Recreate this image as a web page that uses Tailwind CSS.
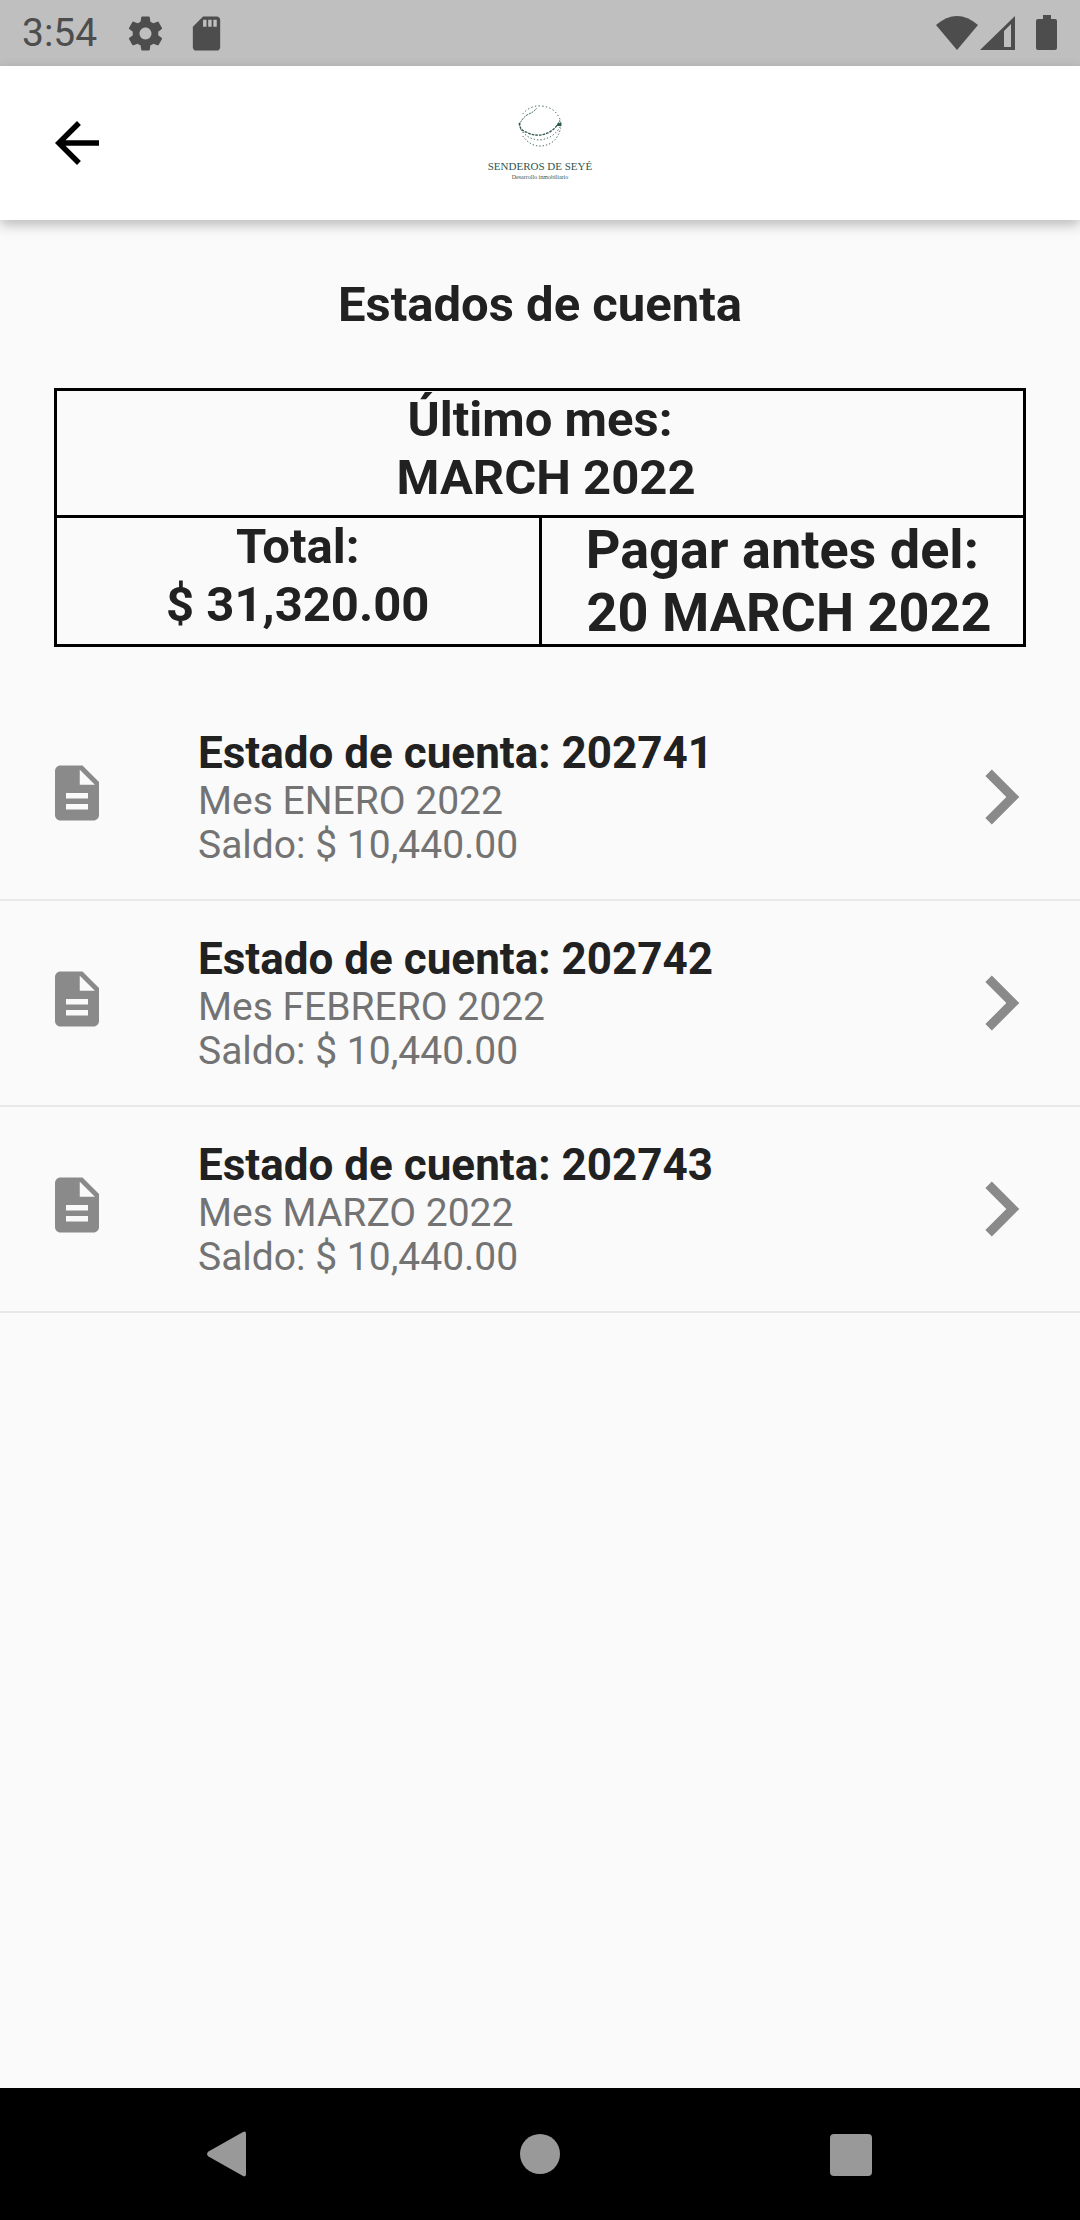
<!DOCTYPE html>
<html lang="es">
<head>
    <meta charset="UTF-8">
    <meta name="viewport" content="width=device-width, initial-scale=1.0">
    <title>Estados de cuenta</title>
    <script src="https://cdn.jsdelivr.net/npm/@tailwindcss/browser@4"></script>
</head>
<body class="flex min-h-screen flex-col bg-[#fafafa] font-['Roboto',sans-serif] text-[#212121]">

    <!-- Barra de estado -->
    <div class="flex h-[66px] items-center bg-[#bfbfbf] px-[22px] text-[#4d4d4d]">
        <span class="text-[39px] leading-none">3:54</span>
        <svg class="ml-7 size-[41px]" viewBox="0 0 24 24" fill="currentColor"><path d="M19.43 12.98c.04-.32.07-.64.07-.98s-.03-.66-.07-.98l2.11-1.65c.19-.15.24-.42.12-.64l-2-3.46c-.12-.22-.39-.3-.61-.22l-2.49 1c-.52-.4-1.08-.73-1.69-.98l-.38-2.65C14.46 2.18 14.25 2 14 2h-4c-.25 0-.46.18-.49.42l-.38 2.65c-.61.25-1.17.59-1.69.98l-2.49-1c-.23-.09-.49 0-.61.22l-2 3.46c-.13.22-.07.49.12.64l2.11 1.65c-.04.32-.07.65-.07.98s.03.66.07.98l-2.11 1.65c-.19.15-.24.42-.12.64l2 3.46c.12.22.39.3.61.22l2.49-1c.52.4 1.08.73 1.69.98l.38 2.65c.03.24.24.42.49.42h4c.25 0 .46-.18.49-.42l.38-2.65c.61-.25 1.17-.59 1.69-.98l2.49 1c.23.09.49 0 .61-.22l2-3.46c.12-.22.07-.49-.12-.64l-2.11-1.65zM12 15.5c-1.93 0-3.5-1.57-3.5-3.5s1.57-3.5 3.5-3.5 3.5 1.57 3.5 3.5-1.57 3.5-3.5 3.5z"/></svg>
        <svg class="ml-5 size-[41px]" viewBox="0 0 24 24" fill="currentColor"><path d="M18 2h-8L4 8v12c0 1.1.9 2 2 2h12c1.1 0 2-.9 2-2V4c0-1.100-.9-2-2-2zm-6 6h-2V4h2v4zm3 0h-2V4h2v4zm3 0h-2V4h2v4z"/></svg>
        <svg class="ml-auto h-9 w-[42px]" viewBox="0 0 42 36" fill="currentColor"><path d="M0 10Q21-8 42 10L21 35z"/></svg>
        <svg class="ml-0.5 size-9" viewBox="0 0 36 36" fill="currentColor"><path fill-rule="evenodd" d="M35 1v34H0zM24 16v16h7V9z"/></svg>
        <svg class="ml-5 h-9 w-[22px]" viewBox="0 0 22 36" fill="currentColor"><path d="M7 0h8v4h4q2 0 2 2v27q0 2-2 2H2q-2 0-2-2V6q0-2 2-2h5z"/></svg>
    </div>

    <!-- Encabezado -->
    <header class="z-10 grid h-[154px] grid-cols-3 items-center bg-white px-11 shadow-[0_5px_12px_rgba(0,0,0,0.25)]">
        <button type="button" aria-label="Regresar" class="size-[66px] text-black">
            <svg class="size-full" viewBox="0 0 24 24" fill="currentColor"><path d="M20 11H7.83l5.59-5.59L12 4l-8 8 8 8 1.41-1.41L7.83 13H20z"/></svg>
        </button>
        <div class="flex flex-col items-center text-[#2f5750]">
            <svg class="size-11" viewBox="24 16 132 132" fill="none" stroke="currentColor" stroke-width="3">
                <path d="M38 46Q60 20 92 22Q134 24 150 62" stroke-dasharray="4 7"/>
                <path d="M29 80Q34 58 56 46Q72 40 80 28" stroke-dasharray="6 3"/>
                <path d="M28 72Q28 94 48 100Q86 120 122 98Q140 86 150 66" stroke-width="4" stroke-dasharray="8 3"/>
                <path d="M32 92Q52 122 88 124Q130 120 151 84" stroke-dasharray="4 6"/>
                <path d="M38 112Q62 144 94 142Q140 138 152 88" stroke-dasharray="4 6"/>
                <path d="M140 80l13-8v9z" fill="currentColor"/>
            </svg>
            <p class="mt-3 font-['Liberation_Serif',serif] text-[11px] leading-3">SENDEROS DE SEYÉ</p>
            <p class="font-['Liberation_Serif',serif] text-[6px] leading-[10px]">Desarrollo inmobiliario</p>
        </div>
    </header>

    <main class="flex-1">
        <h1 class="mt-14 text-center text-[49px] font-bold leading-[58px]">Estados de cuenta</h1>

        <!-- Resumen del último mes -->
        <div class="mt-[54px] px-[54px]">
            <table class="w-full table-fixed border-collapse text-center font-bold">
                <tr class="h-[127px] align-top">
                    <td colspan="2" class="border-3 border-black text-[49px] leading-[58px]">Último mes:<br>&nbsp;MARCH 2022</td>
                </tr>
                <tr class="h-[129px] align-top">
                    <td class="border-3 border-black text-[49px] leading-[58px]">Total:<br>$ 31,320.00</td>
                    <td class="border-3 border-black text-[54px] leading-[63px]">Pagar antes del:<br>&nbsp;20 MARCH 2022</td>
                </tr>
            </table>
        </div>

        <!-- Lista de estados de cuenta -->
        <ul class="mt-12">
            <li class="border-b-2 border-[#e8e8e8]">
                <a href="#" class="flex items-center py-8 pl-11 pr-6">
                    <svg class="mb-2 size-[66px] text-[#8a8a8a]" viewBox="0 0 24 24" fill="currentColor"><path d="M14 2H6c-1.1 0-1.99.9-1.99 2L4 20c0 1.1.89 2 1.99 2H18c1.1 0 2-.9 2-2V8l-6-6zm2 16H8v-2h8v2zm0-4H8v-2h8v2zm-3-5V3.5L18.5 9H13z"/></svg>
                    <div class="ml-[88px] flex-1">
                        <p class="text-[44px] font-bold leading-[52px]">Estado de cuenta: 202741</p>
                        <p class="text-[39px] leading-[44px] text-[#737373]">Mes ENERO 2022<br>Saldo: $ 10,440.00</p>
                    </div>
                    <svg class="size-[110px] text-[#8a8a8a]" viewBox="0 0 24 24" fill="currentColor"><path d="M10 6L8.59 7.41 13.17 12l-4.58 4.59L10 18l6-6z"/></svg>
                </a>
            </li>
            <li class="border-b-2 border-[#e8e8e8]">
                <a href="#" class="flex items-center py-8 pl-11 pr-6">
                    <svg class="mb-2 size-[66px] text-[#8a8a8a]" viewBox="0 0 24 24" fill="currentColor"><path d="M14 2H6c-1.1 0-1.99.9-1.99 2L4 20c0 1.1.89 2 1.99 2H18c1.1 0 2-.9 2-2V8l-6-6zm2 16H8v-2h8v2zm0-4H8v-2h8v2zm-3-5V3.5L18.5 9H13z"/></svg>
                    <div class="ml-[88px] flex-1">
                        <p class="text-[44px] font-bold leading-[52px]">Estado de cuenta: 202742</p>
                        <p class="text-[39px] leading-[44px] text-[#737373]">Mes FEBRERO 2022<br>Saldo: $ 10,440.00</p>
                    </div>
                    <svg class="size-[110px] text-[#8a8a8a]" viewBox="0 0 24 24" fill="currentColor"><path d="M10 6L8.59 7.41 13.17 12l-4.58 4.59L10 18l6-6z"/></svg>
                </a>
            </li>
            <li class="border-b-2 border-[#e8e8e8]">
                <a href="#" class="flex items-center py-8 pl-11 pr-6">
                    <svg class="mb-2 size-[66px] text-[#8a8a8a]" viewBox="0 0 24 24" fill="currentColor"><path d="M14 2H6c-1.1 0-1.99.9-1.99 2L4 20c0 1.1.89 2 1.99 2H18c1.1 0 2-.9 2-2V8l-6-6zm2 16H8v-2h8v2zm0-4H8v-2h8v2zm-3-5V3.5L18.5 9H13z"/></svg>
                    <div class="ml-[88px] flex-1">
                        <p class="text-[44px] font-bold leading-[52px]">Estado de cuenta: 202743</p>
                        <p class="text-[39px] leading-[44px] text-[#737373]">Mes MARZO 2022<br>Saldo: $ 10,440.00</p>
                    </div>
                    <svg class="size-[110px] text-[#8a8a8a]" viewBox="0 0 24 24" fill="currentColor"><path d="M10 6L8.59 7.41 13.17 12l-4.58 4.59L10 18l6-6z"/></svg>
                </a>
            </li>
        </ul>
    </main>

    <!-- Barra de navegación -->
    <nav class="flex h-[132px] items-center justify-center gap-[263px] bg-black text-[#999999]">
        <button type="button" aria-label="Atrás"><svg class="size-12" viewBox="0 0 48 48" fill="currentColor"><path d="M3.500 21.500 38 2q3-1.500 3 2v40q0 3.500-3 2L3.500 26.500q-3-2.500 0-5z"/></svg></button>
        <button type="button" aria-label="Inicio"><svg class="size-12" viewBox="0 0 48 48" fill="currentColor"><circle cx="24" cy="24" r="20"/></svg></button>
        <button type="button" aria-label="Recientes"><svg class="size-12" viewBox="0 0 48 48" fill="currentColor"><rect x="3" y="4" width="42" height="42" rx="4"/></svg></button>
    </nav>
</body>
</html>
